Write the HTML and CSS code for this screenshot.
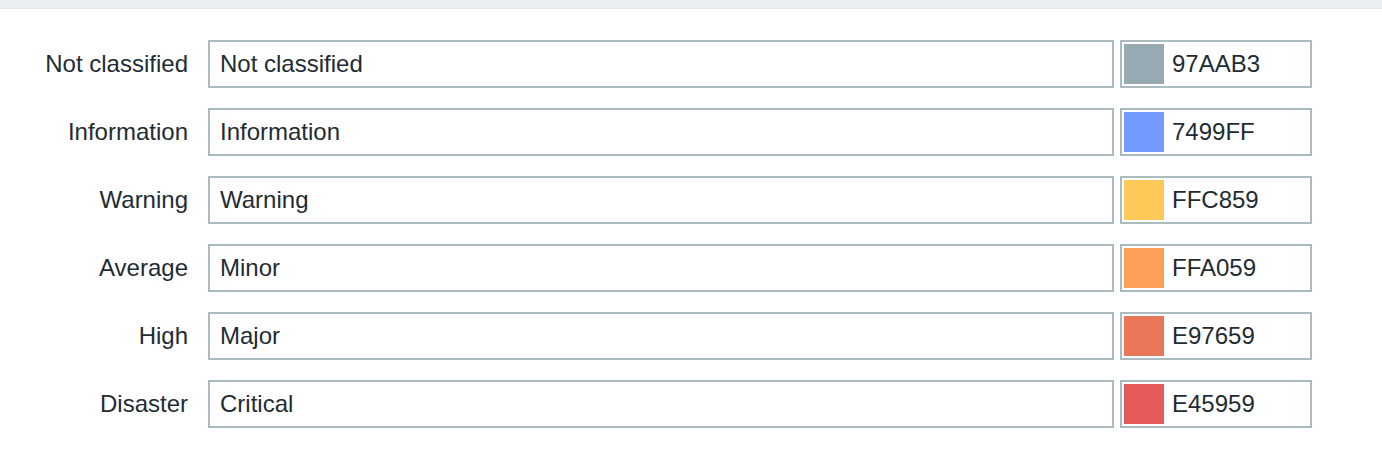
FILE: index.html
```html
<!DOCTYPE html>
<html>
<head>
<meta charset="utf-8">
<link rel="stylesheet" href="styles.css">
</head>
<body>
<div class="topbar"></div>
<div class="form">
  <div class="row">
    <label class="label">Not classified</label>
    <div class="input">Not classified</div>
    <div class="color"><span class="swatch sw-nc"></span><span class="hex">97AAB3</span></div>
  </div>
  <div class="row">
    <label class="label">Information</label>
    <div class="input">Information</div>
    <div class="color"><span class="swatch sw-info"></span><span class="hex">7499FF</span></div>
  </div>
  <div class="row">
    <label class="label">Warning</label>
    <div class="input">Warning</div>
    <div class="color"><span class="swatch sw-warn"></span><span class="hex">FFC859</span></div>
  </div>
  <div class="row">
    <label class="label">Average</label>
    <div class="input">Minor</div>
    <div class="color"><span class="swatch sw-avg"></span><span class="hex">FFA059</span></div>
  </div>
  <div class="row">
    <label class="label">High</label>
    <div class="input">Major</div>
    <div class="color"><span class="swatch sw-high"></span><span class="hex">E97659</span></div>
  </div>
  <div class="row">
    <label class="label">Disaster</label>
    <div class="input">Critical</div>
    <div class="color"><span class="swatch sw-dis"></span><span class="hex">E45959</span></div>
  </div>
</div>
</body>
</html>
```

FILE: styles.css
```css
html, body {
  margin: 0;
  padding: 0;
  background: #ffffff;
}
body {
  font-family: "Liberation Sans", Arial, sans-serif;
  font-size: 24px;
  color: #1f2c33;
}
.topbar {
  height: 8px;
  background: #ebeef0;
  border-bottom: 1px solid #dfe4e7;
}
.form {
  padding-top: 31px;
  display: flex;
  flex-direction: column;
  gap: 20px;
}
.row {
  display: flex;
  align-items: center;
  height: 48px;
}
.label {
  width: 188px;
  margin-right: 20px;
  text-align: right;
  white-space: nowrap;
}
.input {
  box-sizing: border-box;
  width: 906px;
  height: 48px;
  border: 2px solid #acbbc2;
  padding: 0 10px;
  display: flex;
  align-items: center;
  margin-right: 6px;
}
.color {
  box-sizing: border-box;
  width: 192px;
  height: 48px;
  border: 2px solid #acbbc2;
  padding: 2px;
  display: flex;
  align-items: center;
}
.swatch {
  width: 40px;
  height: 40px;
  flex: none;
  margin-right: 8px;
}
.sw-nc { background: #97aab3; }
.sw-info { background: #7499ff; }
.sw-warn { background: #ffc859; }
.sw-avg { background: #ffa059; }
.sw-high { background: #e97659; }
.sw-dis { background: #e45959; }
```
